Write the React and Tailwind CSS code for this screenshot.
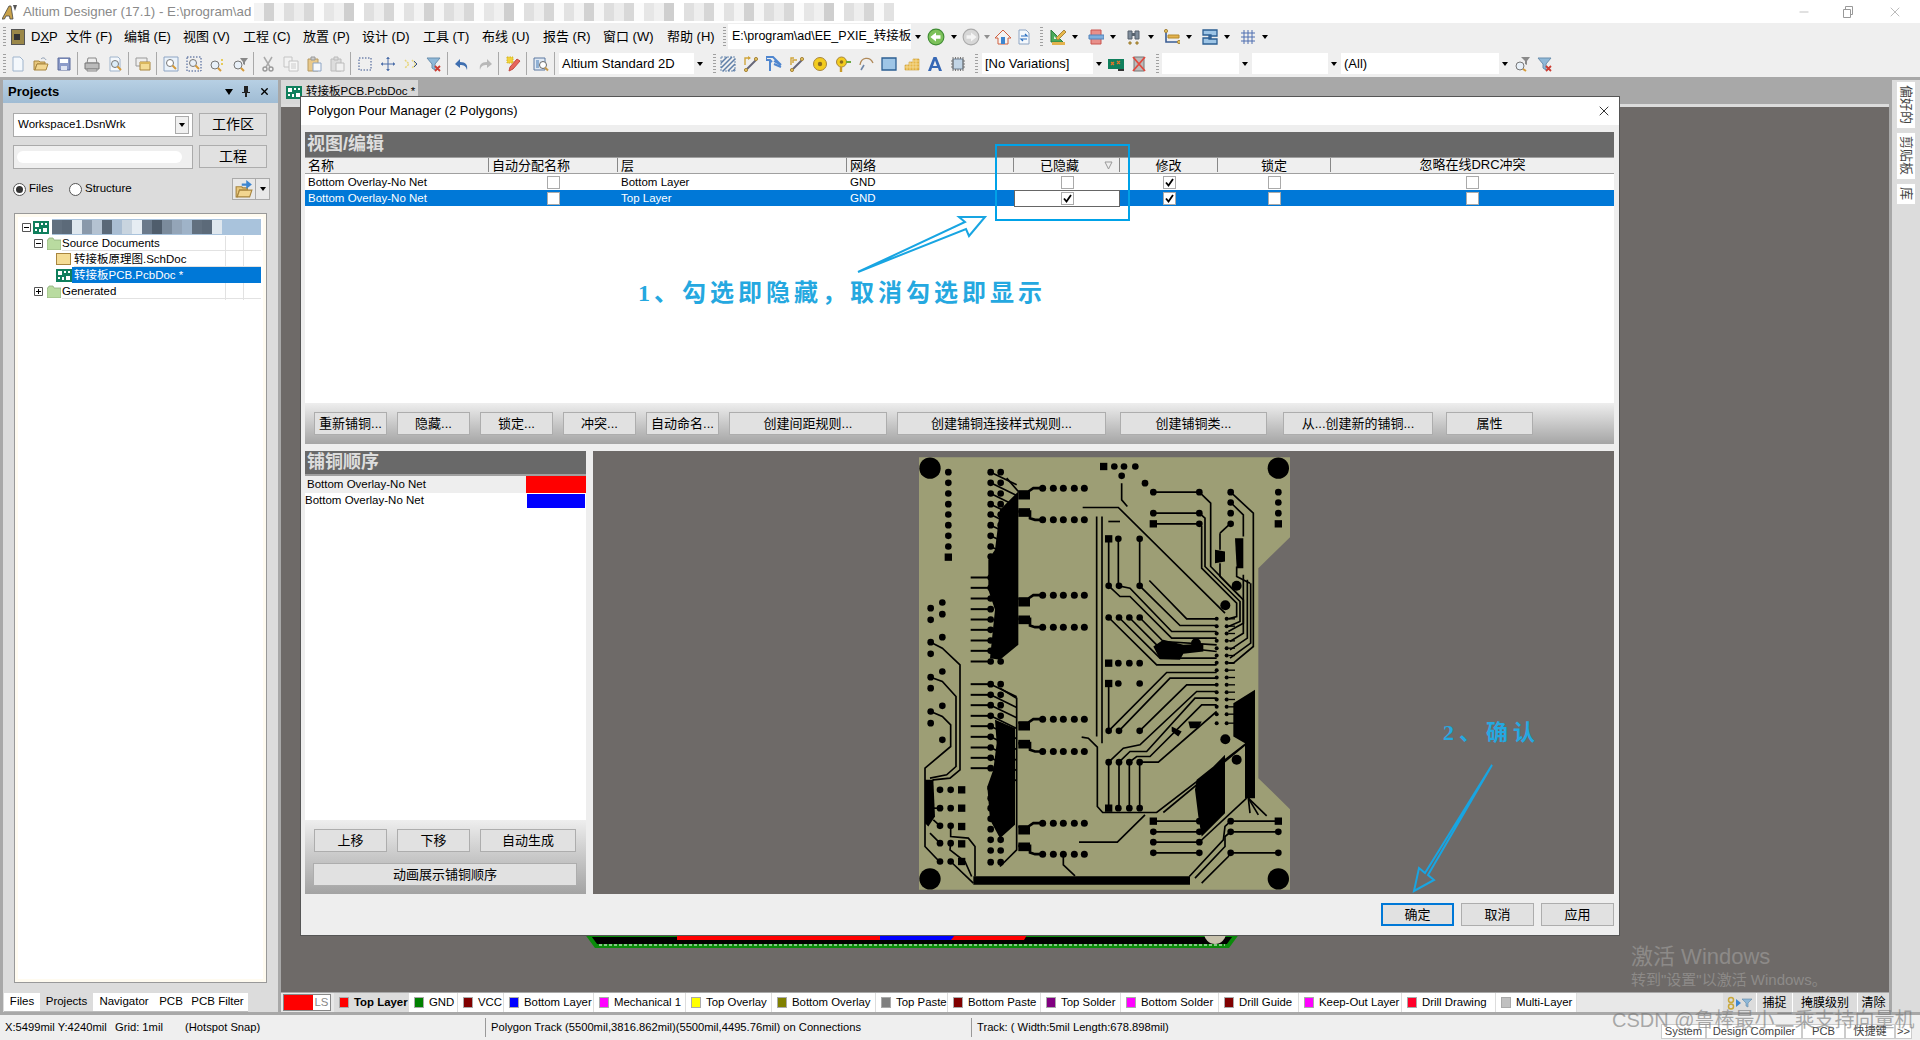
import { X, Minus } from "lucide-react";

const Svg = ({ children, w = 16, h = 16 }) => (
  <svg width={w} height={h} viewBox="0 0 16 16" className="shrink-0">{children}</svg>
);

const Slot = ({ children }) => <div className="w-[23px] h-[20px] flex items-center justify-center shrink-0">{children}</div>;
const Sep = () => <div className="w-[5px] h-[23px] flex justify-center shrink-0"><div className="w-px h-full bg-[#a9a9a9]" /></div>;
const Grip = () => <div className="w-[3px] h-[20px] shrink-0 bg-[repeating-linear-gradient(to_bottom,#a0a0a0_0,#a0a0a0_1px,transparent_1px,transparent_3px)]" />;
const Drop = () => <div className="w-0 h-0 border-x-[3.5px] border-x-transparent border-t-[4px] border-t-black" />;

const icons = {
  newdoc: <Svg><path d="M3 1h7l3 3v11H3z" fill="#f4f8fc" stroke="#9fb4cc" /></Svg>,
  open: <Svg><path d="M1 14V5h5l1 1h5v2H4l-2 6z" fill="#e8c77c" stroke="#a8853e" /><path d="M2 14l2-6h11l-2 6z" fill="#f2d690" stroke="#a8853e" /><path d="M8 3c2-2 4-1 5 1" fill="none" stroke="#8a9ab0" /></Svg>,
  save: <Svg><path d="M2 2h12v12H2z" fill="#8d9cc9" stroke="#5b6a9c" /><path d="M4 3h8v4H4z" fill="#fff" /><path d="M5 10h6v4H5z" fill="#dfe4f2" /></Svg>,
  print: <Svg><path d="M4 2h8l1 5H3z" fill="#eee" stroke="#888" /><path d="M1 7h14v6H1z" fill="#bbb" stroke="#777" /><path d="M3 13h10v2H3z" fill="#ddd" stroke="#888" /></Svg>,
  preview: <Svg><path d="M3 1h8l2 2v12H3z" fill="#f4f8fc" stroke="#9fb4cc" /><circle cx="8" cy="8" r="3.5" fill="#dcecf8" stroke="#777" /><path d="M10.5 10.5L14 14" stroke="#d69b3a" strokeWidth="2" /></Svg>,
  windows: <Svg><path d="M1 2h11v8H1z" fill="#eee" stroke="#999" /><path d="M5 6h10v8H5z" fill="#f4dc95" stroke="#a8853e" /><path d="M5 6h10v2H5z" fill="#d9b65c" /></Svg>,
  zoomA: <Svg><path d="M1 1h14v14H1z" fill="#eaf2fa" stroke="#8ea5c4" /><circle cx="7" cy="7" r="3.5" fill="#fff" stroke="#777" /><path d="M9.5 9.5L13 13" stroke="#d69b3a" strokeWidth="2" /></Svg>,
  zoomB: <Svg><path d="M1 1h14v14H1z" fill="none" stroke="#35508c" strokeDasharray="1.5 1.5" /><circle cx="7" cy="7" r="3.5" fill="#e8f0f8" stroke="#777" /><path d="M9.5 9.5L13 13" stroke="#d69b3a" strokeWidth="2" /></Svg>,
  zoomC: <Svg><circle cx="6" cy="9" r="4" fill="#e8f0f8" stroke="#777" /><path d="M9 12l3 3" stroke="#d69b3a" strokeWidth="2" /><path d="M13 3v2M13 7v2" stroke="#e6cb5a" strokeWidth="2" /></Svg>,
  zoomD: <Svg><circle cx="6" cy="9" r="4" fill="#e8f0f8" stroke="#777" /><path d="M9 12l3 3" stroke="#d69b3a" strokeWidth="2" /><path d="M8 2h8l-3 4v3l-2-1V6z" fill="#888" /></Svg>,
  cut: <Svg><path d="M4 1l6 10M12 1L6 11" stroke="#aaa" strokeWidth="1.5" /><circle cx="5" cy="13" r="2" fill="none" stroke="#999" strokeWidth="1.4" /><circle cx="11" cy="13" r="2" fill="none" stroke="#999" strokeWidth="1.4" /></Svg>,
  copy: <Svg><path d="M1 1h8v10H1z" fill="#f2f2f2" stroke="#c4c4c4" /><path d="M6 5h9v10H6z" fill="#f7f7f7" stroke="#c4c4c4" /><path d="M8 8h5M8 10h5M8 12h5" stroke="#ccc" /></Svg>,
  paste: <Svg><path d="M2 3h10v12H2z" fill="#e9c98b" stroke="#b69a63" /><path d="M5 1h4v3H5z" fill="#ccc" stroke="#999" /><path d="M7 7h8v8H7z" fill="#f6f8fb" stroke="#8ea5c4" /></Svg>,
  paste2: <Svg><path d="M2 3h10v12H2z" fill="#ddd" stroke="#bbb" /><path d="M5 1h4v3H5z" fill="#ddd" stroke="#bbb" /><path d="M7 7h8v8H7z" fill="#f1f1f1" stroke="#bbb" /></Svg>,
  select: <Svg><path d="M2 2h12v12H2z" fill="none" stroke="#35508c" strokeDasharray="1.5 1.5" /></Svg>,
  move: <Svg><path d="M8 1v14M1 8h14" stroke="#4a6da8" /><path d="M8 1l-2 2h4zM8 15l-2-2h4zM1 8l2-2v4zM15 8l-2-2v4z" fill="#4a6da8" /></Svg>,
  selmove: <Svg><path d="M2 4l4 4-4 4M9 4l4 4-4 4" fill="none" stroke="#e8d67a" strokeWidth="1.5" strokeDasharray="2 1" /><path d="M11 5l3 3-3 3" fill="none" stroke="#35508c" /></Svg>,
  clear: <Svg><path d="M1 2h13L9 8v6L6 12V8z" fill="#8fb8d8" stroke="#6a8fae" /><path d="M9 10l5 5M14 10l-5 5" stroke="#cc3b32" strokeWidth="1.8" /></Svg>,
  undo: <Svg><path d="M6 3L1 8l5 4V9c4 0 6 1 7 5 1-5-1-8-7-8z" fill="#3f6fb0" /></Svg>,
  redo: <Svg><path d="M10 3l5 5-5 4V9c-4 0-6 1-7 5-1-5 1-8 7-8z" fill="#b8b8b8" /></Svg>,
  wand: <Svg><path d="M2 1h6v6H2z" fill="#f1d23c" stroke="#d3b322" strokeDasharray="1.5 1" /><path d="M4 15l1-4 7-8 3 2-7 8z" fill="#e9675c" stroke="#c34b42" /></Svg>,
  report: <Svg><path d="M1 2h11v12H1z" fill="#dfe9f4" stroke="#5d79a0" /><path d="M3 4h3v8H3z" fill="#8fb0d4" /><circle cx="10" cy="9" r="3.5" fill="#fff" stroke="#666" /><path d="M12 11.5l3 3" stroke="#c89a4a" strokeWidth="2" /></Svg>,
  hatch: <Svg><path d="M1 1h14v14H1z" fill="#f0f0f0" stroke="#6d8bb0" strokeDasharray="2 1" /><path d="M1 7l6-6M1 12L12 1M3 15L15 3M8 15l7-7M13 15l2-2" stroke="#5e7ea8" strokeWidth="1.5" /></Svg>,
  route: <Svg><path d="M4 13L13 4" stroke="#667" strokeWidth="2" /><circle cx="3" cy="14" r="1.6" fill="#e1c35f" stroke="#a8853e" /><circle cx="13" cy="3" r="1.6" fill="#e1c35f" stroke="#a8853e" /><path d="M2 9V2h5" fill="none" stroke="#d1a63d" strokeWidth="1.4" /><path d="M5 0l3 2-3 2z" fill="#d1a63d" /></Svg>,
  multi: <Svg><path d="M0 1h7l8 8M4 5v10M0 1v3h4l2 2M8 5l7 4M8 8l7 3" fill="none" stroke="#4f86cf" strokeWidth="2" /></Svg>,
  route2: <Svg><path d="M4 13L13 4" stroke="#667" strokeWidth="2" /><circle cx="3" cy="14" r="1.6" fill="#e1c35f" stroke="#a8853e" /><circle cx="13" cy="3" r="1.6" fill="#e1c35f" stroke="#a8853e" /><path d="M2 9V2h3M4 7V4h4" fill="none" stroke="#d1a63d" strokeWidth="1.4" /></Svg>,
  pad: <Svg><circle cx="8" cy="8" r="6.5" fill="#f3cc1e" stroke="#a8853e" /><circle cx="8" cy="8" r="2.2" fill="#8b6b21" /></Svg>,
  via: <Svg><circle cx="6.5" cy="6" r="5" fill="#f3cc1e" stroke="#a8853e" /><circle cx="6.5" cy="6" r="1.8" fill="#8b6b21" /><path d="M11 5h5v2h-5z" fill="#6aa840" /><path d="M6 11v5" stroke="#c89a2a" strokeWidth="2.4" /></Svg>,
  arc: <Svg><path d="M2 9c1-8 10-9 13-2" fill="none" stroke="#b08a5a" strokeWidth="1.3" /><path d="M3 14l3-5" stroke="#6f86a8" strokeWidth="1.6" /></Svg>,
  rect: <Svg><path d="M1 2h14v12H1z" fill="#9ec5e6" stroke="#2d5f93" strokeWidth="1.3" /></Svg>,
  grid: <Svg><path d="M1 14V9h4V6h4V3h6v11z" fill="#e8b84a" stroke="#c99a2f" strokeWidth="0.6" /><path d="M3 9v5M6 6v8M9 3v11M12 3v11M1 11h14M5 8h10M9 5h6" stroke="#f6e2a8" strokeWidth="0.7" /></Svg>,
  text: <Svg><path d="M6.5 1h3L15 15h-3l-1-3H5l-1 3H1zM8 4.5L6 10h4z" fill="#3768b5" /></Svg>,
  chip: <Svg><path d="M3 3h10v10H3z" fill="#c2d5e6" stroke="#6b7d90" /><path d="M3 1v14M5.500 1v2M8 1v2M10.500 1v2M13 1v14M5.500 13v2M8 13v2M10.500 13v2M1 5h2M1 8h2M1 11h2M13 5h2M13 8h2M13 11h2" stroke="#777" /></Svg>,
  board: <Svg w={18}><path d="M0 3h16v10H0z" fill="#0f7f5c" /><path d="M3 6l3 3M6 6L3 9M9 5l3 3M12 5L9 8" stroke="#e2762a" strokeWidth="1.3" /><path d="M10 13h6v2h-6z" fill="#333" /></Svg>,
  boardx: <Svg><path d="M3 1h10v14H3z" fill="#bbb" stroke="#777" /><path d="M2 1l12 14M14 1L2 15" stroke="#e24a3f" strokeWidth="1.8" /></Svg>,
  filter: <Svg><circle cx="6" cy="10" r="4" fill="#e8f0f8" stroke="#777" /><path d="M9 13l3 2" stroke="#d69b3a" strokeWidth="2" /><path d="M7 1h9l-3 4v4l-2-1V5z" fill="#8a8a8a" /></Svg>,
  back: <Svg w={18} h={18}><circle cx="8" cy="8" r="7" fill="#7cc15a" stroke="#3f8c33" /><path d="M3 8l5-4v2.500h4v3H8V12z" fill="#fff" /></Svg>,
  forward: <Svg w={18} h={18}><circle cx="8" cy="8" r="7" fill="#d7d7d7" stroke="#aaa" /><path d="M13 8L8 4v2.500H4v3h4V12z" fill="#f4f4f4" /></Svg>,
  home: <Svg><path d="M8 1L0 9h3v6h10V9h3z" fill="#f4f4f4" stroke="#d1603f" /><path d="M6 8h4v7H6z" fill="#3d86d0" /></Svg>,
  doc: <Svg><path d="M3 1h7l3 3v11H3z" fill="#f4f8fc" stroke="#8ea5c4" /><path d="M5 7h6l-2-2M11 10H5l2 2" fill="none" stroke="#2a6fc0" strokeWidth="1.2" /></Svg>,
  ruler: <Svg><path d="M1 1v12h12z" fill="#4aaa5a" stroke="#2c7d3d" /><path d="M4 7v3h3z" fill="#d8f0de" /><path d="M6 9l8-8 2 2-8 8z" fill="#e8b84a" stroke="#a8853e" /><path d="M2 13h13v3H2z" fill="#e3b24e" /></Svg>,
  align: <Svg><path d="M3 1h10v14H3z" fill="#e88f8a" stroke="#c9544e" /><path d="M1 6h15v4H1z" fill="#7eaedd" stroke="#5283bb" /></Svg>,
  bino: <Svg><path d="M2 2h4v8H2zM9 2h4v8H9z" fill="#7f8d9c" stroke="#56616d" /><path d="M6 4h3v3H6z" fill="#56616d" /><path d="M3 13h2v2H3zM10 13h2v2h-2z" fill="#d9b65c" stroke="#9a7a2f" /></Svg>,
  dim: <Svg><path d="M2 2v11h13" fill="none" stroke="#3a5d94" strokeWidth="1.6" /><path d="M4 6h11v3H4z" fill="#e3b24e" stroke="#b58a2c" /><circle cx="2" cy="2" r="1.600" fill="#e1c35f" stroke="#a8853e" /><circle cx="15" cy="13" r="1.600" fill="#e1c35f" stroke="#a8853e" /></Svg>,
  stack: <Svg><path d="M1 1h14v6H7v3h8v5H1V9h8V6H1z" fill="#9ec5e6" stroke="#2d5f93" strokeWidth="1.3" /></Svg>,
  gridblue: <Svg><path d="M1 4h14M1 8h14M1 12h14M4 1v14M8 1v14M12 1v14" stroke="#4e6eb0" /></Svg>,
  funnel: <Svg><path d="M1 2h13L9 8v6L6 12V8z" fill="#8fb8d8" stroke="#6a8fae" /><path d="M9 10l5 5M14 10l-5 5" stroke="#cc3b32" strokeWidth="1.8" /></Svg>,
  openArrow: <Svg w={18} h={18}><path d="M1 15V6h5l1 1h4v2H4l-2 6z" fill="#e8c77c" stroke="#a8853e" /><path d="M2 15l2-6h11l-2 6z" fill="#f2d690" stroke="#a8853e" /><path d="M6 3h4V0l5 4-5 4V5H6z" fill="#3d86d0" /></Svg>,
};

const menus = [
  ["文件 (F)", "w-[58px]"], ["编辑 (E)", "w-[59px]"], ["视图 (V)", "w-[60px]"], ["工程 (C)", "w-[60px]"], ["放置 (P)", "w-[59px]"], ["设计 (D)", "w-[61px]"],
  ["工具 (T)", "w-[59px]"], ["布线 (U)", "w-[61px]"], ["报告 (R)", "w-[60px]"], ["窗口 (W)", "w-[64px]"], ["帮助 (H)", "w-[56px]"],
];

const tb1 = [["newdoc", "open", "save"], ["print", "preview"], ["windows"], ["zoomA", "zoomB", "zoomC", "zoomD"], ["cut", "copy", "paste", "paste2"], ["select", "move", "selmove", "clear"], ["undo", "redo"], ["wand"], ["report"]];
const tb2 = ["hatch", "route", "multi", "route2", "pad", "via", "arc", "rect", "grid", "text", "chip"];

const mosaicTop = ["bg-[#f3f3f3]", "bg-[#e6e6e6]", "bg-[#fafafa]", "bg-[#d8d8d8]", "bg-[#eeeeee]", "bg-[#dedede]", "bg-white", "bg-[#d2d2d2]", "bg-[#f0f0f0]", "bg-[#e2e2e2]", "bg-[#fbfbfb]", "bg-[#d6d6d6]", "bg-[#ececec]", "bg-[#e0e0e0]", "bg-[#f6f6f6]", "bg-[#cfcfcf]"];
const mosaicBlue = ["bg-[#62707f]", "bg-[#8a99aa]", "bg-[#a9bdd2]", "bg-[#6b7a8b]", "bg-[#94a5b8]", "bg-[#5c6a79]", "bg-[#b4c2d1]", "bg-[#c8d4df]", "bg-[#4f5d6c]", "bg-[#9fb3c8]", "bg-[#dfe7ee]", "bg-[#5a6877]", "bg-[#e6edf3]", "bg-[#7b8b9c]"];

const TitleBar = () => (
  <div className="h-[23px] bg-white flex items-center shrink-0 relative">
    <svg width="16" height="16" viewBox="0 0 16 16" className="ml-[2px]"><path d="M0 15L7 2h2l2 13H8l-.5-3H4l-1.500 3z" fill="#c9a24a" stroke="#444" strokeWidth="0.8" /><path d="M11 1h4l-2 6z" fill="#555" /></svg>
    <span className="ml-[5px] text-[13.3px] text-[#8a8a8a] whitespace-nowrap">Altium Designer (17.1) - E:\program\ad</span>
    <div className="flex ml-[3px] h-[23px] items-center">
      {Array.from({ length: 64 }).map((_, i) => (
        <div key={i} className={"w-[10px] h-[18px] " + mosaicTop[(i * 7) % 16]} />
      ))}
    </div>
    <div className="ml-auto flex items-center text-[#999]">
      <Minus size={14} strokeWidth={1} className="mr-[31px]" />
      <svg width="12" height="12" viewBox="0 0 12 12" className="mr-[33px]"><path d="M1.500 3.500h7v8h-7zM3.500 3.500V.5h7v8h-2" fill="none" stroke="#999" /></svg>
      <X size={16} strokeWidth={1} className="mr-[17px]" />
    </div>
  </div>
);

const MenuBar = () => (
  <div className="h-[27px] bg-[#efefef] flex items-center shrink-0 pl-[3px] text-[13px] text-black">
    <Grip />
    <div className="w-[14px] h-[16px] ml-[5px] bg-[#9a8748] border border-[#555] shrink-0 flex items-center">
      <div className="w-[6px] h-[6px] bg-[#333] ml-[2px]" />
    </div>
    <span className="ml-[6px] w-[35px]">D<u>X</u>P</span>
    {menus.map(([m, w]) => <span key={m} className={w + " whitespace-nowrap shrink-0"}>{m}</span>)}
    <Grip />
    <div className="ml-[2px] w-[196px] h-[25px] bg-white flex items-center shrink-0">
      <span className="flex-1 pl-[4px] overflow-hidden whitespace-nowrap text-[12.5px]">E:\program\ad\EE_PXIE_转接板\</span>
      <div className="w-[13px] h-full bg-[#efefef] flex items-center justify-center"><Drop /></div>
    </div>
    <div className="ml-[3px] flex items-center w-[20px]">{icons.back}</div>
    <div className="w-[13px] flex justify-center mr-[2px]"><Drop /></div>
    <div className="flex items-center w-[18px]">{icons.forward}</div>
    <div className="w-[13px] flex justify-center mr-[2px] opacity-40"><Drop /></div>
    <div className="w-[21px] flex">{icons.home}</div>
    <div className="w-[21px] flex">{icons.doc}</div>
    <div className="ml-[3px] mr-[5px]"><Grip /></div>
    {["ruler", "align", "bino", "dim", "stack", "gridblue"].map((k) => (
      <div key={k} className="flex items-center w-[38px] shrink-0">
        <div className="w-[20px] flex justify-center">{icons[k]}</div>
        <div className="w-[14px] flex justify-center"><Drop /></div>
      </div>
    ))}
  </div>
);

const ComboBox = ({ w, label }) => (
  <div className={w + " h-[21px] bg-white flex items-center shrink-0 text-[13px]"}>
    <span className="flex-1 pl-[3px] whitespace-nowrap overflow-hidden">{label}</span>
    <div className="w-[11px] h-full bg-[#efefef] flex items-center justify-center"><Drop /></div>
  </div>
);

const ToolBar = () => (
  <div className="h-[27px] bg-[#efefef] flex items-center shrink-0 pl-[3px]">
    <Grip />
    {tb1.map((g, i) => (
      <div key={i} className="flex items-center">
        {g.map((k) => <Slot key={k}>{icons[k]}</Slot>)}
        <Sep />
      </div>
    ))}
    <div className="ml-[2px]"><ComboBox w="w-[146px]" label="Altium Standard 2D" /></div>
    <div className="w-[8px]" /><Grip />
    {tb2.map((k) => <Slot key={k}>{icons[k]}</Slot>)}
    <div className="w-[6px]" /><Grip /><div className="w-[4px]" />
    <ComboBox w="w-[122px]" label="[No Variations]" />
    <Slot>{icons.board}</Slot>
    <Slot>{icons.boardx}</Slot>
    <div className="w-[6px]" /><Grip /><div className="w-[3px]" />
    <ComboBox w="w-[88px]" label="" />
    <div className="w-[2px]" />
    <ComboBox w="w-[87px]" label="" />
    <div className="w-[2px]" />
    <ComboBox w="w-[169px]" label="(All)" />
    <Slot>{icons.filter}</Slot>
    <Slot>{icons.funnel}</Slot>
  </div>
);

const TreeRow = ({ children }) => (
  <div className="h-[16px] flex items-center relative">{children}</div>
);

const Folder = () => (
  <svg width="14" height="13" viewBox="0 0 14 13"><path d="M0 3h1l1-2h4l1 2h7v10H0z" fill="#b9dba0" stroke="#8fae7b" strokeWidth="0.8" /></svg>
);
const PcbDoc = () => (
  <svg width="16" height="13" viewBox="0 0 16 13" className="shrink-0"><path d="M0 0h16v13H0z" fill="#0f7f5c" /><path d="M2 2h4v4H2zM8 2h2v2H8zM12 2h2v2h-2zM2 8h2v2H2zM6 8h2v3H6zM10 7h4v4h-4z" fill="#fff" /></svg>
);
const Expand = ({ plus }) => (
  <svg width="9" height="9" viewBox="0 0 9 9" className="shrink-0"><path d="M.5.5h8v8h-8z" fill="#fff" stroke="#555" /><path d={plus ? "M2 4.500h5M4.500 2v5" : "M2 4.500h5"} stroke="#000" /></svg>
);

const ProjectsPanel = () => (
  <div className="w-[275px] bg-[#dcdcdc] flex flex-col shrink-0">
    <div className="h-[23px] bg-linear-to-b from-[#b7d0e4] to-[#a0bcd4] flex items-center pl-[5px] pr-[8px] shrink-0">
      <span className="text-[13px] font-bold">Projects</span>
      <div className="ml-auto flex items-center gap-[9px]">
        <div className="w-0 h-0 border-x-[4px] border-x-transparent border-t-[6px] border-t-black" />
        <svg width="8" height="11" viewBox="0 0 8 11"><path d="M2 0h4v6h2v1H5v4H3V7H0V6h2z" fill="#222" /></svg>
        <X size={11} strokeWidth={3} />
      </div>
    </div>
    <div className="flex gap-[6px] pl-[10px] mt-[10px] h-[24px] shrink-0">
      <div className="w-[180px] bg-white border border-[#aaa] flex items-center text-[11.5px] pl-[4px]">
        <span className="flex-1">Workspace1.DsnWrk</span>
        <div className="w-[14px] h-[18px] mr-[3px] border border-[#aaa] bg-[#f0f0f0] flex items-center justify-center"><Drop /></div>
      </div>
      <div className="w-[68px] h-[23px] bg-[#e1e1e1] border border-[#adadad] flex items-center justify-center text-[14px]">工作区</div>
    </div>
    <div className="flex gap-[6px] pl-[10px] mt-[8px] h-[24px] shrink-0">
      <div className="w-[180px] bg-[#efefef] border border-[#aaa] flex items-center px-[3px]"><div className="w-[165px] h-[12px] bg-white rounded-full" /></div>
      <div className="w-[68px] h-[23px] bg-[#e1e1e1] border border-[#adadad] flex items-center justify-center text-[14px]">工程</div>
    </div>
    <div className="flex items-center pl-[10px] mt-[9px] h-[22px] text-[11.5px] shrink-0">
      <div className="w-[13px] h-[13px] rounded-full border border-[#555] bg-white flex items-center justify-center"><div className="w-[7px] h-[7px] rounded-full bg-[#333]" /></div>
      <span className="ml-[3px] w-[40px]">Files</span>
      <div className="w-[13px] h-[13px] rounded-full border border-[#555] bg-white" />
      <span className="ml-[3px]">Structure</span>
      <div className="ml-auto mr-[8px] w-[38px] h-[22px] border border-[#aaa] bg-[#e8e8e8] flex items-center">
        <div className="w-[22px] flex justify-center">{icons.openArrow}</div>
        <div className="w-px h-full bg-[#aaa]" />
        <div className="flex-1 flex justify-center"><Drop /></div>
      </div>
    </div>
    <div className="ml-[11px] mt-[13px] w-[253px] flex-1 bg-white border border-[#999] shadow-[inset_0_0_0_3px_#fffbf0] pt-[5px] pl-[7px] pr-[5px] text-[11.5px] mb-[10px] relative">
      <div className="absolute left-[210px] top-[22px] w-px h-[64px] bg-[#e2e2e2]" />
      <div className="absolute left-[228px] top-[22px] w-px h-[64px] bg-[#e2e2e2]" />
      <TreeRow>
        <Expand />
        <div className="ml-[2px]"><PcbDoc /></div>
        <div className="flex-1 ml-[3px] h-full bg-[#a9c3dc] flex items-center">
          {Array.from({ length: 17 }).map((_, i) => <div key={i} className={"w-[10px] h-[14px] " + mosaicBlue[(i * 5) % 14]} />)}
        </div>
      </TreeRow>
      <TreeRow><div className="ml-[12px]"><Expand /></div><div className="ml-[4px]"><Folder /></div><span className="ml-[1px] flex-1 h-full leading-[16px] border-b border-[#e2e2e2]">Source Documents</span></TreeRow>
      <TreeRow>
        <div className="ml-[34px] w-[15px] h-[12px] bg-[#f4dc95] border border-[#a8853e] shrink-0" />
        <span className="ml-[3px] flex-1 h-full leading-[16px] border-b border-[#e2e2e2]">转接板原理图.SchDoc</span>
      </TreeRow>
      <TreeRow>
        <div className="ml-[34px] shrink-0"><PcbDoc /></div>
        <span className="flex-1 h-full leading-[16px] bg-[#0078d7] text-white pl-[2px]">转接板PCB.PcbDoc *</span>
      </TreeRow>
      <TreeRow><div className="ml-[12px]"><Expand plus /></div><div className="ml-[4px]"><Folder /></div><span className="ml-[1px] flex-1 h-full leading-[16px] border-b border-[#e2e2e2]">Generated</span></TreeRow>
    </div>
    <div className="h-[19px] flex items-end pl-[1px] text-[11.5px] shrink-0">
      {[["Files", "w-[36px]"], ["Projects", "w-[53px]"], ["Navigator", "w-[62px]"], ["PCB", "w-[32px]"], ["PCB Filter", "w-[61px]"]].map(([t, w]) => (
        <div key={t} className={w + " h-[19px] flex items-center justify-center border-b border-[#bbb] " + (t === "Projects" ? "bg-[#dcdcdc]" : "bg-white")}>{t}</div>
      ))}
    </div>
  </div>
);

const layers = [
  ["Top Layer", "bg-[#ff0000]", "w-[75px]"], ["GND", "bg-[#008000]", "w-[49px]"], ["VCC", "bg-[#800000]", "w-[46px]"], ["Bottom Layer", "bg-[#0000ff]", "w-[90px]"],
  ["Mechanical 1", "bg-[#ff00ff]", "w-[92px]"], ["Top Overlay", "bg-[#ffff00]", "w-[86px]"], ["Bottom Overlay", "bg-[#808000]", "w-[104px]"], ["Top Paste", "bg-[#808080]", "w-[72px]"],
  ["Bottom Paste", "bg-[#800000]", "w-[93px]"], ["Top Solder", "bg-[#800080]", "w-[80px]"], ["Bottom Solder", "bg-[#ff00ff]", "w-[98px]"], ["Drill Guide", "bg-[#800000]", "w-[80px]"],
  ["Keep-Out Layer", "bg-[#ff00ff]", "w-[103px]"], ["Drill Drawing", "bg-[#ff002a]", "w-[94px]"], ["Multi-Layer", "bg-[#c0c0c0]", "w-[81px]"],
];

const LayerBar = () => (
  <div className="h-[19px] bg-[#e8e8e8] flex items-stretch text-[11.4px] shrink-0">
    <div className="ml-[2px] mr-[3px] w-[48px] bg-white border border-[#888] flex my-[1px]">
      <div className="w-[29px] bg-[#ff0000]" />
      <span className="flex-1 text-center text-[#888] leading-[15px]">LS</span>
    </div>
    {layers.map(([t, c, w], i) => (
      <div key={t} className={w + " flex items-center pl-[5px] border-r border-[#ddd] whitespace-nowrap shrink-0 " + (i === 0 ? "bg-[#dcdcdc] font-bold" : "bg-white")}>
        <div className={"w-[10px] h-[11px] border border-[#aaa] shrink-0 mr-[5px] " + c} />
        {t}
      </div>
    ))}
    <div className="ml-auto flex items-stretch text-[12px]">
      <div className="w-[33px] bg-[#dcdcdc] flex items-center justify-center gap-[1px]">
        <svg width="8" height="14" viewBox="0 0 8 14"><circle cx="4" cy="4" r="2.500" fill="none" stroke="#c9a83a" strokeWidth="1.5" /><circle cx="4" cy="10.500" r="2.500" fill="none" stroke="#c9a83a" strokeWidth="1.5" /></svg>
        <div className="w-0 h-0 border-y-[4px] border-y-transparent border-l-[5px] border-l-[#3d86d0]" />
        <svg width="10" height="10" viewBox="0 0 10 10"><path d="M0 1h10L6 5v4L4 8V5z" fill="#8fb8d8" stroke="#5e88a8" strokeWidth="0.6" /></svg>
      </div>
      <div className="w-[36px] bg-[#dcdcdc] border-l border-[#fff] flex items-center justify-center">捕捉</div>
      <div className="w-[65px] bg-[#dcdcdc] border-l border-[#fff] flex items-center justify-center">掩膜级别</div>
      <div className="w-[32px] bg-[#dcdcdc] border-l border-[#fff] flex items-center justify-center">清除</div>
    </div>
  </div>
);

const Check = ({ on }) => (
  <div className="w-[13px] h-[13px] bg-white border border-[#aaa] flex items-center justify-center">
    {on && <svg width="9" height="9" viewBox="0 0 9 9"><path d="M1 4.500L3.500 7.500 8 1" fill="none" stroke="#000" strokeWidth="1.800" /></svg>}
  </div>
);

const gridCols = "grid grid-cols-[184px_129px_229px_167px_106px_98px_113px_283px]";

const Row = ({ sel, layer, checks }) => (
  <div className={gridCols + " h-[16px] items-center text-[11.5px] " + (sel ? "bg-[#0078d7] text-white" : "bg-white text-black")}>
    <span className="pl-[3px]">Bottom Overlay-No Net</span>
    <div className="flex justify-center"><Check /></div>
    <span className="pl-[3px]">{layer}</span>
    <span className="pl-[3px]">GND</span>
    <div className={"h-[17px] flex justify-center items-center " + (sel ? "bg-white border border-[#666]" : "")}><Check on={checks[0]} /></div>
    <div className="flex justify-center"><Check on={checks[1]} /></div>
    <div className="flex justify-center"><Check on={checks[2]} /></div>
    <div className="flex justify-center"><Check on={checks[3]} /></div>
  </div>
);

const Head = ({ children, center }) => (
  <div className={"h-[14px] border-r border-[#888] flex items-center leading-none " + (center ? "justify-center" : "pl-[3px]")}>{children}</div>
);

const Btn = ({ w, children, primary }) => (
  <div className={w + " h-[23px] bg-[#e1e1e1] flex items-center justify-center text-[13px] shrink-0 whitespace-nowrap " + (primary ? "border-2 border-[#0078d7]" : "border border-[#adadad]")}>{children}</div>
);

// pcb preview, coordinates are taken from a 3x crop of the picture
const dotRows = [115, 210, 436, 532, 808, 905, 1120, 1213];
const dotXs = [428, 460, 490, 523, 553];
const pads = [
  ...[67, 99, 131, 163, 194, 226, 258, 290].map((y) => [145, y]),
  [92, 475], [127, 458], [127, 493], [92, 510], [92, 577], [127, 562], [92, 612], [92, 682], [127, 665], [92, 715], [92, 785], [127, 768], [92, 820], [127, 870],
  [152, 1020], [120, 1020], [152, 1075], [120, 1075], [120, 1128], [152, 1128], [120, 1180], [152, 1180], [120, 1235], [152, 1235],
  [643, 50], [672, 50], [706, 50], [665, 78], [735, 100], [760, 127], [760, 190], [898, 127], [898, 190], [898, 222],
  [992, 127], [992, 158], [992, 190], [992, 222], [1135, 127], [1135, 158], [1135, 190],
  [655, 267], [719, 267], [626, 408], [657, 408], [719, 408], [626, 503], [657, 503], [688, 503], [719, 503],
  [655, 640], [688, 640], [719, 640], [655, 701], [719, 701], [626, 843], [657, 843], [719, 843],
  [626, 937], [657, 937], [688, 937], [719, 937], [655, 1075], [688, 1075], [719, 1075],
  [760, 1146], [760, 1177], [760, 1209], [898, 1114], [898, 1146], [898, 1177], [898, 1209], [1135, 1146], [1135, 1209], [992, 1114], [992, 1146], [992, 1209],
  [1010, 408], [976, 466], [976, 868], [1010, 930], [888, 580],
];
const squares = [[145, 322], [611, 50], [760, 222], [1135, 222], [626, 267], [626, 640], [626, 701], [626, 1075], [760, 1114], [1135, 1114], [185, 1020], [185, 1075], [185, 1130], [185, 1182], [185, 1235]];
const icPads = [507, 529, 551, 573, 595, 617, 639, 661, 683, 705, 727, 749, 771, 793, 820];
const traces = [
  "548,173 655,173 975,490", "590,200 590,860", "606,200 606,880", "545,862 565,865 592,892 592,1070 608,1088 770,1088 1040,880", "790,1088 1035,885",
  "665,100 665,150 682,170", "760,127 898,127 932,160 932,350 1030,450 1030,520 985,545", "760,190 898,190 915,205 915,350 1020,455 1020,515 985,530", "760,222 898,222 905,230 905,355 1010,460 1010,500 985,507",
  "992,127 1060,190 1060,590 1000,640 985,640", "992,158 1030,195 1030,260", "1052,400 1052,580 990,625", "1042,390 1042,565 990,600", "1030,375 1030,550 990,575",
  "960,250 990,222", "960,250 960,300", "960,340 960,380 1020,440", "1010,350 1010,380 1050,400",
  "626,267 626,408 660,440 690,440 815,565 950,565", "655,267 655,408 690,415 815,545 950,545", "719,267 719,408 840,527 950,527", "748,392 860,507 950,507",
  "626,503 770,645 950,645", "657,503 780,625 950,625", "688,503 770,585 950,605", "719,503 790,575 950,585",
  "626,843 800,668 950,668", "657,843 810,685 950,685", "719,843 860,705 950,705",
  "626,701 626,843", "626,937 670,895 720,885 890,725 950,725", "657,937 690,905 740,905 885,745 950,745", "688,937 710,920 750,920 905,765 950,765", "719,937 775,937 950,785",
  "626,937 626,1075", "657,937 657,1075", "688,937 688,1075", "719,937 719,1075",
  "760,1114 898,1114", "760,1146 898,1146", "760,1177 898,1177", "760,1209 898,1209", "992,1114 1135,1114", "992,1146 1135,1146", "992,1209 1135,1209",
  "868,1280 970,1170 975,1130 992,1114", "885,1285 975,1190 975,1160 992,1146", "905,1300 985,1220 992,1209", "537,1177 652,1177 735,1095",
  "490,1213 490,1245 525,1278", "92,577 127,595 180,645 180,960 150,985 100,990 85,1005", "92,682 127,695 168,740 168,950 140,975 90,985", "92,785 127,800 152,825 152,890 75,955 75,1190 118,1235",
  "120,1075 85,1075", "120,1128 100,1110", "120,1180 90,1150", "152,1128 152,1160 205,1165 225,1190 225,1280", "152,1180 150,1200 195,1235 215,1280", "152,1235 220,1300",
  "1045,1045 1050,1090", "1045,1045 1075,1095", "1045,1045 1100,1098", "1040,1045 900,1175", "625,215 660,215",
  "300,715 350,745 350,1200 300,1250", "320,85 355,125",
];
const stubs = [383, 414, 446, 478, 509, 540, 572, 603, 635, 703, 735, 766, 798, 829, 861, 893, 924, 955];
const fills = [
  "300,180 355,125 355,585 300,630 270,625 285,480 265,420 265,330 285,300",
  "285,810 345,835 345,1125 300,1165 270,1110 262,1010 280,960 290,880",
  "890,990 940,950 975,915 975,1090 905,1160 895,1100 885,1020",
  "1000,760 1065,720 1065,1045 1035,1045 1035,880 1000,860",
  "760,590 790,570 850,585 910,582 910,605 850,612 840,630 780,628",
  "945,300 975,305 975,335 945,340", "1005,265 1030,265 1030,355 1010,355",
  "865,815 905,815 895,835 870,835", "815,830 845,845 835,860 815,845",
  "75,990 100,990 105,1100 85,1130 75,1120",
];

const PcbPreview = () => (
  <svg width="371" height="433" viewBox="57 22 1113 1298">
    <polygon points="57,22 1170,22 1170,262 1075,355 1075,985 1170,1078 1170,1320 57,1320" fill="#9d9e75" />
    {fills.map((p, i) => <polygon key={i} points={p} fill="#000" />)}
    {[[90, 55], [1135, 55], [90, 1287], [1135, 1287]].map(([x, y]) => <circle key={x + "-" + y} cx={x} cy={y} r="32" fill="#000" />)}
    {traces.map((p, i) => <polyline key={i} points={p} fill="none" stroke="#000" strokeWidth="5" />)}
    <path d="M220 1292H870" stroke="#000" strokeWidth="26" />
    {stubs.map((y) => <path key={y} d={`M212 ${y}H272`} stroke="#000" strokeWidth="6" />)}
    {[67, 99, 131, 163, 194, 226, 258, 290, 320, 703, 735, 766, 798, 829, 861, 893, 924, 955].map((y) => <path key={y} d={`M272 ${y}L350 ${y + 38}`} stroke="#000" strokeWidth="5" />)}
    {[67, 99, 131, 163, 194, 226, 258, 290, 320, 383, 414, 446, 478, 509, 540, 572, 603, 635, 703, 735, 766, 798, 829, 861, 893, 924, 955, 1015, 1045, 1075, 1107, 1138, 1170, 1202, 1237].map((y) => (
      <g key={y}><circle cx="272" cy={y} r="10" fill="#000" /><circle cx="302" cy={y} r="10" fill="#000" /></g>
    ))}
    {dotRows.map((y, i) => (
      <g key={y}>
        {dotXs.map((x) => <circle key={x} cx={x} cy={y} r="10.500" fill="#000" />)}
        <path d={i % 2 ? `M355 ${y - 25}H390V${y - 5}L405 ${y}H428` : `M355 ${y + 10}H385L400 ${y}H428`} fill="none" stroke="#000" strokeWidth="8" />
        <rect x="355" y={i % 2 ? y - 35 : y + 8} width="35" height="26" fill="#000" />
      </g>
    ))}
    {pads.map(([x, y]) => <circle key={x + "," + y} cx={x} cy={y} r={x === 976 || x === 1010 || x === 888 ? 15 : 10} fill="#000" />)}
    {squares.map(([x, y]) => <rect key={x + "," + y} x={x - 11} y={y - 11} width="22" height="22" fill="#000" />)}
    {icPads.map((y) => (
      <g key={y}><circle cx="950" cy={y} r="6" fill="#000" /><circle cx="980" cy={y} r="6" fill="#000" /><path d={`M985 ${y}H1005`} stroke="#000" strokeWidth="4" /></g>
    ))}
  </svg>
);

const PolygonDialog = () => (
  <div className="absolute left-[300px] top-[96px] w-[1320px] h-[840px] bg-[#eeeeee] border border-[#555] flex flex-col z-10">
    <div className="h-[28px] bg-white flex items-center pl-[7px] pr-[7px] text-[13px] shrink-0">
      <span>Polygon Pour Manager (2 Polygons)</span>
      <X size={16} strokeWidth={1.2} className="ml-auto" />
    </div>
    <div className="flex-1 flex flex-col pt-[7px] pl-[4px] pr-[5px]">
      <div className="h-[25px] bg-[#696969] text-[#dddddd] text-[18px] font-bold pl-[2px] flex items-center shrink-0">视图/编辑</div>
      <div className={gridCols + " h-[17px] bg-[#efefef] border-y border-y-[#a0a0a0] items-start text-[13px] shrink-0"}>
        <Head>名称</Head>
        <Head>自动分配名称</Head>
        <Head>层</Head>
        <Head>网络</Head>
        <div className="h-[14px] border-r border-l border-[#888] -ml-px flex items-center justify-center relative pr-[14px] leading-none">
          已隐藏
          <svg width="9" height="9" viewBox="0 0 9 9" className="absolute right-[6px]"><path d="M1 1h7L4.500 8z" fill="none" stroke="#999" /></svg>
        </div>
        <Head center>修改</Head>
        <Head center>锁定</Head>
        <div className="text-center h-[14px] leading-[14px]">忽略在线DRC冲突</div>
      </div>
      <div className="h-[229px] bg-white shrink-0">
        <Row layer="Bottom Layer" checks={[false, true, false, false]} />
        <Row sel layer="Top Layer" checks={[true, true, false, false]} />
      </div>
      <div className="h-[41px] bg-linear-to-b from-[#eeeeee] to-[#a5a5a5] flex items-center pl-[9px] gap-[10px] shrink-0">
        <Btn w="w-[73px]">重新铺铜...</Btn>
        <Btn w="w-[73px]">隐藏...</Btn>
        <Btn w="w-[73px]">锁定...</Btn>
        <Btn w="w-[73px]">冲突...</Btn>
        <Btn w="w-[73px]">自动命名...</Btn>
        <Btn w="w-[158px]">创建间距规则...</Btn>
        <Btn w="w-[209px]">创建铺铜连接样式规则...</Btn>
        <Btn w="w-[147px] ml-[4px]">创建铺铜类...</Btn>
        <Btn w="w-[150px] ml-[6px]">从...创建新的铺铜...</Btn>
        <Btn w="w-[87px] ml-[3px]">属性</Btn>
      </div>
      <div className="h-[443px] mt-[7px] flex gap-[7px] shrink-0">
        <div className="w-[281px] flex flex-col shrink-0">
          <div className="h-[25px] bg-[#696969] text-[#dddddd] text-[18px] font-bold pl-[2px] flex items-center border-b-2 border-b-[#a0a0a0] shrink-0">铺铜顺序</div>
          <div className="flex-1 bg-white text-[11.5px]">
            <div className="h-[17px] flex items-center bg-[#eeeeee]">
              <span className="flex-1 pl-[2px]">Bottom Overlay-No Net</span>
              <div className="w-[60px] h-full bg-[#ff0000]" />
            </div>
            <div className="h-[16px] flex items-center">
              <span className="flex-1">Bottom Overlay-No Net</span>
              <div className="w-[58px] h-[14px] mr-[1px] bg-[#0000ff]" />
            </div>
          </div>
          <div className="h-[74px] bg-linear-to-b from-[#eeeeee] to-[#a3a3a3] pt-[9px] pl-[9px] flex flex-col gap-[11px] shrink-0">
            <div className="flex gap-[10px]">
              <Btn w="w-[73px]">上移</Btn>
              <Btn w="w-[73px]">下移</Btn>
              <Btn w="w-[96px]">自动生成</Btn>
            </div>
            <Btn w="w-[264px] -ml-px">动画展示铺铜顺序</Btn>
          </div>
        </div>
        <div className="flex-1 bg-[#6e6a68] flex items-center justify-center pl-[2px] pt-[1px]"><PcbPreview /></div>
      </div>
      <div className="flex justify-end gap-[7px] mt-[9px]">
        <Btn w="w-[73px]" primary>确定</Btn>
        <Btn w="w-[73px]">取消</Btn>
        <Btn w="w-[73px]">应用</Btn>
      </div>
    </div>
  </div>
);

const Annotations = () => (
  <div className="absolute inset-0 z-20 pointer-events-none">
    <svg width="1920" height="1040" className="absolute left-0 top-0">
      <rect x="996" y="145" width="133" height="75" fill="none" stroke="#00a2e8" strokeWidth="2" />
      <path d="M858 272L965 222 959 217 985 217 969 236 966 229z" fill="none" stroke="#18a5e2" strokeWidth="2" />
      <path d="M1492 765L1425 873 1419 868 1414 891 1434 880 1428 875z" fill="none" stroke="#18a5e2" strokeWidth="2" />
    </svg>
    <span className="absolute left-[638px] top-[276px] text-[24px] leading-[34px] font-bold tracking-[4px] text-[#25a8e0] whitespace-nowrap [font-family:'Liberation_Serif','Noto_Sans_CJK_SC',serif]">1、勾选即隐藏，取消勾选即显示</span>
    <span className="absolute left-[1443px] top-[717px] text-[22px] leading-[32px] font-bold tracking-[5px] text-[#25a8e0] whitespace-nowrap [font-family:'Liberation_Serif','Noto_Sans_CJK_SC',serif]">2、确认</span>
    <span className="absolute left-[1631px] top-[943px] text-[22px] leading-[28px] text-[#8d8a88] whitespace-nowrap">激活 Windows</span>
    <span className="absolute left-[1631px] top-[970px] text-[15px] leading-[20px] text-[#8d8a88] whitespace-nowrap">转到"设置"以激活 Windows。</span>
    <span className="absolute left-[1612px] top-[1006px] text-[20px] leading-[28px] text-[#77777799] whitespace-nowrap">CSDN @鲁棒最小二乘支持向量机</span>
  </div>
);

const StatusBar = () => (
  <div className="h-[25px] bg-[#efefef] flex items-center text-[11.2px] shrink-0">
    <span className="ml-[5px] w-[110px]">X:5499mil Y:4240mil</span>
    <span className="w-[70px]">Grid: 1mil</span>
    <span className="w-[300px]">(Hotspot Snap)</span>
    <div className="w-px h-[19px] bg-[#999]" />
    <span className="ml-[5px] w-[480px] whitespace-nowrap">Polygon Track (5500mil,3816.862mil)(5500mil,4495.76mil) on Connections</span>
    <div className="w-px h-[19px] bg-[#999]" />
    <span className="ml-[5px]">Track: ( Width:5mil Length:678.898mil)</span>
    <div className="ml-auto mr-[8px] flex h-[15px] mt-[8px] text-[#444]">
      {[["System", "w-[45px]"], ["Design Compiler", "w-[96px]"], ["PCB", "w-[43px]"], ["快捷键", "w-[50px]"], [">>", "w-[17px]"]].map(([t, w]) => (
        <div key={t} className={w + " bg-white border border-[#ccc] flex items-center justify-center whitespace-nowrap"}>{t}</div>
      ))}
    </div>
  </div>
);

const dockTabs = [["偏好的", "h-[48px]"], ["剪贴板", "h-[48px]"], ["库", "h-[22px]"]];

function App() {
  return (
    <div className="w-[1920px] h-[1040px] relative overflow-hidden flex flex-col bg-[#a8a8a8] text-black [font-family:'Liberation_Sans','Noto_Sans_CJK_SC',sans-serif]">
      <TitleBar />
      <MenuBar />
      <ToolBar />
      <div className="flex-1 flex pt-[3px] pb-[3px] pl-[3px] min-h-0">
        <ProjectsPanel />
        <div className="ml-[3px] w-[1608px] flex flex-col shrink-0">
          <div className="h-[24px] shrink-0 flex items-start">
            <div className="w-[137px] h-[24px] bg-[#d8d8d8] flex items-center pl-[5px] text-[11.5px] whitespace-nowrap">
              <PcbDoc />
              <span className="ml-[4px]">转接板PCB.PcbDoc *</span>
            </div>
          </div>
          <div className="h-[3px] bg-[#dcdcdc] shrink-0" />
          <div className="flex-1 bg-[#6e6a68]" />
          <div className="h-px bg-[#a8a8a8] shrink-0" />
          <LayerBar />
        </div>
        <div className="ml-[3px] flex-1 bg-[#dcdcdc] flex flex-col items-center gap-[3px] pt-[1px] text-[13px] text-[#444]">
          {dockTabs.map(([t, h]) => (
            <div key={t} className={h + " w-[20px] bg-white border border-[#ddd] flex items-center justify-center [writing-mode:vertical-rl] [text-orientation:sideways]"}>{t}</div>
          ))}
        </div>
      </div>
      <StatusBar />
      <PolygonDialog />
      {/* bit of the board sticking out under the dialog */}
      <svg width="655" height="16" viewBox="0 0 655 16" className="absolute left-[585px] top-[935px]">
        <path d="M3 0l8 11h632l8-11z" fill="#000" stroke="#0a8a0a" strokeWidth="4" />
        <path d="M92 0h350l-3 5H92z" fill="#ff0000" />
        <path d="M295 0h75l-4 5h-71z" fill="#0000ff" />
        <path d="M14 10h626" stroke="#fff" strokeDasharray="3 2" />
        <circle cx="630" cy="-2" r="11" fill="#c7c1ac" />
      </svg>
      <Annotations />
    </div>
  );
}

export default App;
